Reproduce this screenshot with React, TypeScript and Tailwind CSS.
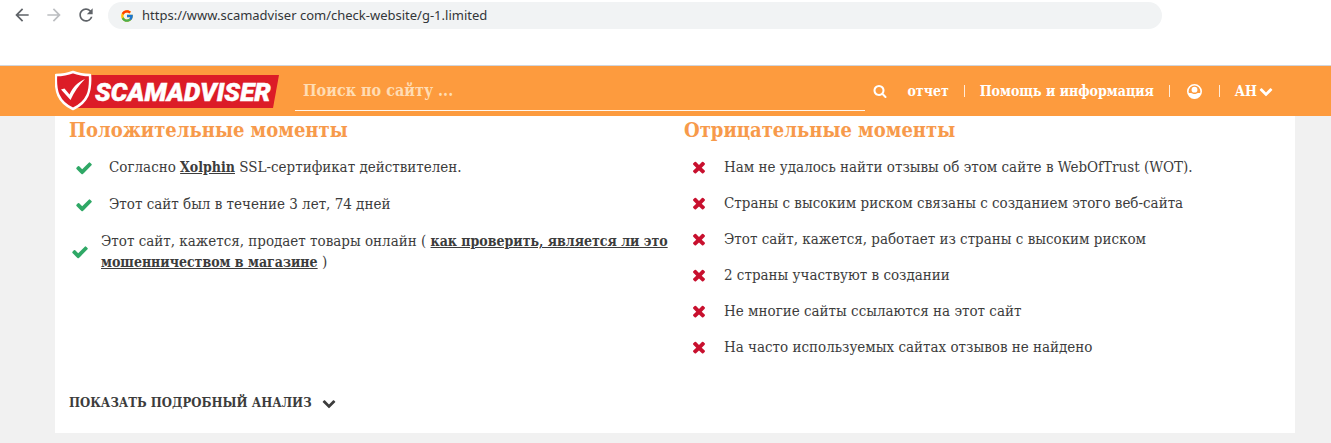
import React, { useState } from 'react';
import { MdArrowBack, MdArrowForward, MdRefresh } from 'react-icons/md';
import { FcGoogle } from 'react-icons/fc';

const SERIF = "font-['Roboto_Slab','DejaVu_Serif_Condensed','DejaVu_Serif',serif]";

const negatives = [
  'Нам не удалось найти отзывы об этом сайте в WebOfTrust (WOT).',
  'Страны с высоким риском связаны с созданием этого веб-сайта',
  'Этот сайт, кажется, работает из страны с высоким риском',
  '2 страны участвуют в создании',
  'Не многие сайты ссылаются на этот сайт',
  'На часто используемых сайтах отзывов не найдено',
];

function Icon({ d, className }: { d: string; className: string }) {
  return (
    <svg viewBox="0 0 1792 1792" fill="currentColor" aria-hidden="true" className={`shrink-0 ${className}`}>
      <path d={d} />
    </svg>
  );
}

const CHECK = 'M1671 566q0 40-28 68l-724 724-136 136q-28 28-68 28t-68-28l-136-136-362-362q-28-28-28-68t28-68l136-136q28-28 68-28t68 28l294 295 656-657q28-28 68-28t68 28l136 136q28 28 28 68z';
const TIMES = 'M1490 1322q0 40-28 68l-136 136q-28 28-68 28t-68-28l-294-294-294 294q-28 28-68 28t-68-28l-136-136q-28-28-28-68t28-68l294-294-294-294q-28-28-28-68t28-68l136-136q28-28 68-28t68 28l294 294 294-294q28-28 68-28t68 28l136 136q28 28 28 68t-28 68l-294 294 294 294q28 28 28 68z';
const SEARCH = 'M1216 832q0-185-131.5-316.5t-316.5-131.5-316.5 131.5-131.5 316.5 131.5 316.5 316.5 131.5 316.5-131.5 131.5-316.5zm512 832q0 52-38 90t-90 38q-54 0-90-38l-343-342q-179 124-399 124-143 0-273.5-55.5t-225-150-150-225-55.5-273.5 55.5-273.5 150-225 225-150 273.5-55.5 273.5 55.5 225 150 150 225 55.5 273.5q0 220-124 399l343 343q37 37 37 90z';
const CHEVRON = 'M1683 808l-742 741q-19 19-45 19t-45-19l-742-741q-19-19-19-45.5t19-45.5l166-165q19-19 45-19t45 19l531 531 531-531q19-19 45-19t45 19l166 165q19 19 19 45.5t-19 45.5z';

function UserIcon() {
  return (
    <svg viewBox="0 0 28 28" className="h-[15px] w-[15px]" aria-hidden="true">
      <circle cx="14" cy="14" r="12.5" fill="none" stroke="currentColor" strokeWidth="3" />
      <circle cx="14" cy="10.5" r="5.500" fill="currentColor" />
      <path d="M3 17c3 0 6 0 8 1 2 1 4 1 6 0 2-1 5-1 8-1 0 5-5 10-11 10S3 22 3 17z" fill="currentColor" />
    </svg>
  );
}

function Logo() {
  return (
    <svg viewBox="0 0 224 42" className="h-[42px] w-[224px]" aria-hidden="true">
      <path d="M22 5h202l-6 33H22z" fill="#dc1c27" />
      <path d="M18 2C13 4 7 5 1 5c-1 16 2 27 17 34 15-7 18-18 17-34-6 0-12-1-17-3z" fill="#dc1c27" stroke="#fff" strokeWidth="2.500" strokeLinejoin="round" />
      <path d="M6 19.500l3.500-1 5 6C18 17 23 12 30 9c-6 6-11 13-14.500 21z" fill="#fff" />
      <text x="40" y="31" fill="#fff" stroke="#fff" strokeWidth="0.500" fontSize="26" className="font-['Roboto',sans-serif] font-black italic">SCAMADVISER</text>
    </svg>
  );
}

function BrowserBar() {
  return (
    <div className="flex h-[66px] items-start border-b border-gray-300 bg-white pr-[169px] pl-3">
      <div className="flex h-[30px] items-center gap-3 text-[#5f6368]">
        <button type="button" aria-label="Назад"><MdArrowBack className="h-5 w-5" /></button>
        <button type="button" aria-label="Вперёд" className="text-[#bcbec1]"><MdArrowForward className="h-5 w-5" /></button>
        <button type="button" aria-label="Обновить"><MdRefresh className="h-5 w-5" /></button>
      </div>
      <div className="mt-0.5 ml-3 flex h-[27px] flex-1 items-center gap-2 rounded-full bg-[#f1f3f4] pl-3">
        <FcGoogle className="h-3.5 w-3.5 shrink-0" />
        <input
          type="text"
          aria-label="Адрес"
          defaultValue="https://www.scamadviser com/check-website/g-1.limited"
          className="w-full bg-transparent font-['Noto_Sans',sans-serif] text-[13px] text-[#333639] outline-none"
        />
      </div>
    </div>
  );
}

function Header() {
  return (
    <header className="flex h-[50px] items-center bg-[#fd9b3e] pr-[58px] pl-[55px] text-white">
      <a href="#" aria-label="Scamadviser"><Logo /></a>
      <form className="ml-4 flex flex-1 items-center" onSubmit={e => e.preventDefault()}>
        <input
          type="search"
          aria-label="Поиск по сайту"
          placeholder="Поиск по сайту ..."
          className="h-10 flex-1 border-b border-white/90 bg-transparent px-2 text-base font-bold outline-none placeholder:text-[#ffdcb3]"
        />
        <button type="submit" aria-label="Искать" className="ml-2">
          <Icon d={SEARCH} className="h-3.5 w-3.5" />
        </button>
      </form>
      <nav className="ml-5 flex items-center gap-[15px] text-sm font-bold">
        <a href="#">отчет</a>
        <span className="h-3 w-px bg-white/80" />
        <a href="#">Помощь и информация</a>
        <span className="h-3 w-px bg-white/80" />
        <a href="#" aria-label="Профиль" className="mx-0.5"><UserIcon /></a>
        <span className="h-3 w-px bg-white/80" />
        <button type="button" className="flex items-center gap-0.5">
          АН <Icon d={CHEVRON} className="h-3.5 w-3.5" />
        </button>
      </nav>
    </header>
  );
}

export default function App() {
  const [open, setOpen] = useState(false);

  return (
    <div className={`min-h-screen bg-[#f1f1f1] ${SERIF}`}>
      <BrowserBar />
      <Header />
      <main className="mr-9 ml-[55px] bg-white px-3.5 pb-5 text-[15px] text-[#3c3c3c]">
        <div className="grid grid-cols-[615fr_597fr]">
          <section>
            <h2 className="text-xl leading-7 font-bold text-[#f79a4b]">Положительные моменты</h2>
            <ul className="mt-[5px]">
              <li className="flex h-[37px] items-center gap-4 pl-1.5">
                <Icon d={CHECK} className="h-[18px] w-[18px] text-[#2fa866]" />
                <span>Согласно <a href="#" className="text-sm font-bold underline">Xolphin</a> SSL-сертификат действителен.</span>
              </li>
              <li className="flex h-[37px] items-center gap-4 pl-1.5">
                <Icon d={CHECK} className="h-[18px] w-[18px] text-[#2fa866]" />
                <span>Этот сайт был в течение 3 лет, 74 дней</span>
              </li>
              <li className="mt-2 flex items-center gap-3 pl-0.5">
                <Icon d={CHECK} className="h-[18px] w-[18px] text-[#2fa866]" />
                <span className="leading-[21px]">
                  Этот сайт, кажется, продает товары онлайн ( <a href="#" className="text-sm leading-[21px] font-bold underline">как проверить, является ли это мошенничеством в магазине</a> )
                </span>
              </li>
            </ul>
          </section>
          <section>
            <h2 className="text-xl leading-7 font-bold text-[#f79a4b]">Отрицательные моменты</h2>
            <ul className="mt-[5px]">
              {negatives.map(text => (
                <li key={text} className="flex h-9 items-center gap-4 pl-1.5">
                  <Icon d={TIMES} className="h-[18px] w-[18px] text-[#c8102e]" />
                  <span>{text}</span>
                </li>
              ))}
            </ul>
          </section>
        </div>
        <button type="button" aria-expanded={open} onClick={() => setOpen(!open)} className="mt-7 flex items-center gap-2.5 text-[13px] leading-5 font-bold">
          ПОКАЗАТЬ ПОДРОБНЫЙ АНАЛИЗ
          <Icon d={CHEVRON} className="h-3.5 w-3.5" />
        </button>
      </main>
    </div>
  );
}
